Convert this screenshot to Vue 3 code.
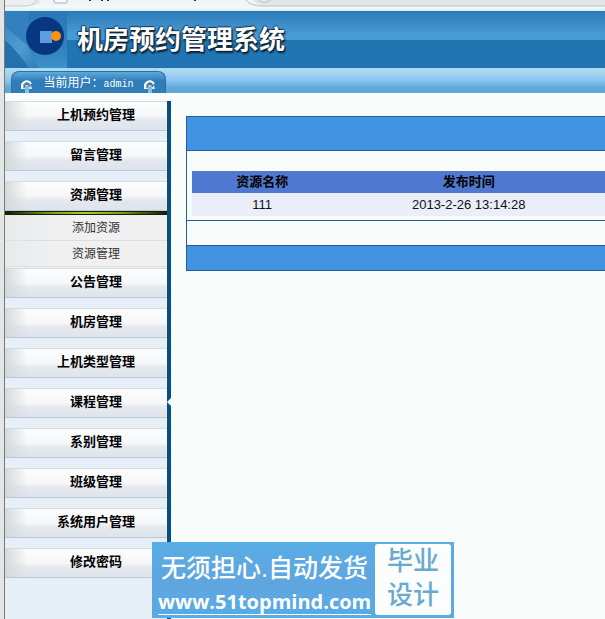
<script setup>
import { ref } from 'vue'

const user = 'admin'
const openMenu = ref('资源管理')

const menus = [
    { title: '上机预约管理' },
    { title: '留言管理' },
    { title: '资源管理', children: ['添加资源', '资源管理'] },
    { title: '公告管理' },
    { title: '机房管理' },
    { title: '上机类型管理' },
    { title: '课程管理' },
    { title: '系别管理' },
    { title: '班级管理' },
    { title: '系统用户管理' },
    { title: '修改密码' },
]

const resources = [
    { name: '111', date: '2013-2-26 13:14:28' },
]

function toggle(title)
{
    openMenu.value = openMenu.value === title ? '' : title
}
</script>

<template>
    <div class="window">
        <div class="frame">
            <svg class="tabs" width="605" height="11" aria-hidden="true">
                <rect width="605" height="6" fill="#e2e6e5"/>
                <path d="M0 0H248Q252 6 260 6H22Q34 6 36 0Z" fill="#f1f5f6"/>
                <path d="M0 0H31Q29 6 22 6H0Z" fill="#eceef0"/>
                <path d="M0 6H20Q29 6 31 0" fill="none" stroke="#c9cccd"/>
                <path d="M241 0Q246 6 256 6H605" fill="none" stroke="#b9bfbf"/>
                <path d="M49 0V2Q49 3 51 3H60Q62 3 62 2V0" fill="#f6fbfc" stroke="#9fb0ba"/>
                <path d="M253 0Q259 5 266 0" fill="#d7e7ef" stroke="#b5c6ce"/>
                <path d="M85 0v1M97 0v1M103 0v1M190 0v1" stroke="#333" stroke-width="2"/>
            </svg>

            <header class="banner">
                <svg class="logo" width="62" height="57" aria-hidden="true">
                    <defs>
                        <linearGradient id="beam" x1="0" y1="0" x2="1" y2="1">
                            <stop offset="0" stop-color="#3e8cc8"/>
                            <stop offset=".5" stop-color="#4f9ad0"/>
                            <stop offset="1" stop-color="#2b7ab4"/>
                        </linearGradient>
                        <linearGradient id="plate" x1="0" y1="0" x2="0" y2="1">
                            <stop offset="0" stop-color="#2a78b9"/>
                            <stop offset=".6" stop-color="#2f7fbd"/>
                            <stop offset="1" stop-color="#3d90c8"/>
                        </linearGradient>
                    </defs>
                    <path d="M0 0H62V57H0Z" fill="#3480bf"/>
                    <path d="M0 16L22 34L34 57H24L0 30Z" fill="url(#beam)"/>
                    <path d="M0 29Q14 42 24 57H0Z" fill="#2470ac"/>
                    <path d="M24 0H62V57H34Q24 46 22 22Z" fill="url(#plate)"/>
                    <circle cx="40" cy="25" r="19" fill="#073780"/>
                    <rect x="35" y="20" width="12" height="12" fill="#5c9ddd"/>
                    <circle cx="51" cy="25" r="5" fill="#ff930c"/>
                </svg>
                <h1>机房预约管理系统</h1>
            </header>

            <div class="userbar">
                <div class="user">
                    <svg width="12" height="16" viewBox="0 0 12 16" aria-hidden="true">
                        <path d="M1 12A5 5 0 1 1 11 12Z" fill="#d9e7ee"/>
                        <path d="M1 12A5 6 0 0 1 10 7" fill="none" stroke="#fff" stroke-width="2"/>
                        <path d="M3 11A3 3 0 0 1 9 10" fill="none" stroke="#3b4650" stroke-width="1"/>
                        <path d="M6 9V16" stroke="#7ec0ea" stroke-width="4"/>
                    </svg>
                    <span>当前用户：<b>{{ user }}</b></span>
                    <svg width="12" height="16" viewBox="0 0 12 16" aria-hidden="true">
                        <path d="M1 12A5 5 0 1 1 11 12Z" fill="#d9e7ee"/>
                        <path d="M1 12A5 6 0 0 1 10 7" fill="none" stroke="#fff" stroke-width="2"/>
                        <path d="M3 11A3 3 0 0 1 9 10" fill="none" stroke="#3b4650" stroke-width="1"/>
                        <path d="M6 9V16" stroke="#7ec0ea" stroke-width="4"/>
                    </svg>
                </div>
            </div>

            <div class="body">
                <nav class="sidebar">
                    <section v-for="menu in menus" :key="menu.title" :class="{ open: menu.children && openMenu === menu.title }">
                        <button type="button" class="menu" @click="toggle(menu.title)">{{ menu.title }}</button>
                        <ul v-if="menu.children && openMenu === menu.title">
                            <li v-for="child in menu.children" :key="child"><a href="#">{{ child }}</a></li>
                        </ul>
                    </section>
                </nav>
                <div class="divider">
                    <svg width="4" height="8" aria-hidden="true"><path d="M4 0V8L0 4Z" fill="#f0f7fa"/></svg>
                </div>

                <main>
                    <div class="panel">
                        <div class="panel-head"></div>
                        <div class="panel-body">
                            <table>
                                <thead>
                                    <tr><th class="name">资源名称</th><th>发布时间</th></tr>
                                </thead>
                                <tbody>
                                    <tr v-for="item in resources" :key="item.name">
                                        <td>{{ item.name }}</td>
                                        <td>{{ item.date }}</td>
                                    </tr>
                                </tbody>
                            </table>
                        </div>
                        <div class="panel-pager"></div>
                        <div class="panel-foot"></div>
                    </div>
                </main>
            </div>
        </div>

        <aside class="promo">
            <div class="promo-text">
                <p>无须担心.自动发货</p>
                <a href="#">www.51topmind.com</a>
            </div>
            <div class="promo-tag">毕业<br>设计</div>
        </aside>
    </div>
</template>

<style>
body
{
    margin: 0;
    background: #f8fcfb;
}
</style>

<style scoped>
.window
{
    position: relative;
    display: flex;
    min-height: 100vh;
    box-sizing: border-box;
    border-left: 4px solid #e4e6e6;
    overflow: hidden;
    font: 12px/16px "Liberation Sans", "Noto Sans CJK SC", sans-serif;
    color: #111;
}

.frame
{
    display: flex;
    flex: 1;
    flex-direction: column;
    min-width: 0;
    border-left: 1px solid #77797c;
}

.tabs
{
    display: block;
    flex: none;
    background: linear-gradient(#f4f9f9 7px, #d3f3fb);
}

.banner
{
    display: flex;
    align-items: center;
    gap: 10px;
    height: 57px;
    background: linear-gradient(#36759f 0, #2e7dbc 2px, #4798d3 22px, #4a9ad5 29px, #2176b1 29px, #2175b5 55px, #2870a0);
}

.banner h1
{
    margin: 0;
    font-size: 26px;
    line-height: 40px;
    font-weight: 700;
    color: #fff;
    text-shadow: 1px 1px 1px #0b2237, -1px 0 1px #18374f, 0 -1px 1px #18374f, 1px 2px 2px #0b2237;
}

.userbar
{
    display: flex;
    align-items: flex-end;
    height: 25px;
    padding-left: 6px;
    background: linear-gradient(#a4dcf8, #add8f0 3px, #8dc5ef 12px, #78b9e6 15px, #5ca6d9 21px, #65a8cb);
}

.user
{
    display: flex;
    align-items: flex-end;
    justify-content: space-between;
    width: 155px;
    height: 22px;
    box-sizing: border-box;
    padding: 0 9px;
    border: 1px solid #2d70a4;
    border-bottom: 0;
    border-radius: 8px 8px 0 0;
    background: linear-gradient(#60a9da, #2e7db9 9px, #2f7eb7);
    color: #fff;
}

.user span
{
    align-self: center;
}

.user b
{
    font: 10px "Liberation Mono", monospace;
}

.body
{
    display: flex;
    flex: 1;
    padding-top: 8px;
}

.sidebar
{
    flex: none;
    width: 162px;
    background: #e6eff8;
}

section
{
    margin-bottom: 10px;
}

section.open
{
    margin-bottom: 0;
}

.menu
{
    display: block;
    width: 100%;
    height: 30px;
    padding: 0 0 2px 20px;
    border: 0;
    border-top: 1px solid #d5dcdf;
    border-bottom: 1px solid #bcc8d2;
    background:
        linear-gradient(90deg, #d3d9da, #e6eae900 22px),
        linear-gradient(#fcfdfd, #f5f7f8 14px, #e5e9ee 18px, #dde4eb);
    font: bold 13px/16px "Liberation Sans", "Noto Sans CJK SC", sans-serif;
    color: #000;
    cursor: pointer;
}

ul
{
    margin: 0;
    padding: 4px 0 1px;
    list-style: none;
    background: linear-gradient(90deg, #101a05, #7da51c 30%, #a8cf26 50%, #7da51c 70%, #101a05) 0 1px / 100% 2px no-repeat, linear-gradient(#14200c 4px, #f0f0f0 4px);
}

li
{
    height: 26px;
    box-sizing: border-box;
    border-bottom: 1px solid #dddfe0;
    background: linear-gradient(90deg, #e8eaec, #f0f0f1 30%);
    text-align: center;
}

li a
{
    display: block;
    padding-left: 20px;
    line-height: 26px;
    color: #333;
    text-decoration: none;
}

.divider
{
    display: flex;
    align-items: center;
    flex: none;
    width: 4px;
    background: #06507f;
}

.divider svg
{
    margin-bottom: -84px;
}

main
{
    flex: 1;
    min-width: 0;
    padding: 15px 0 0 15px;
}

.panel
{
    border: 1px solid #205f9f;
    border-right: 0;
}

.panel-head
{
    height: 33px;
    background: #4294e2;
}

.panel-body
{
    padding: 20px 0 4px 5px;
    border-top: 1px solid #205f9f;
    border-bottom: 1px solid #205f9f;
}

.panel-pager
{
    height: 24px;
}

.panel-foot
{
    height: 24px;
    border-top: 1px solid #205f9f;
    background: #4294e2;
}

table
{
    width: 100%;
    table-layout: fixed;
    border-collapse: collapse;
    font-size: 13px;
    line-height: 18px;
    text-align: center;
}

th
{
    height: 22px;
    padding: 0;
    background: #4f79d0;
    color: #000;
}

td
{
    height: 23px;
    padding: 0;
    background: #e9eef8;
}

.name
{
    width: 34%;
}

.promo
{
    position: absolute;
    left: 148px;
    bottom: 1px;
    display: flex;
    gap: 4px;
    box-sizing: border-box;
    width: 302px;
    height: 76px;
    padding: 2px 3px 3px 6px;
    background: linear-gradient(#58ade6, #5fa5df 50%, #56ace6);
}

.promo-text
{
    flex: 1;
    min-width: 0;
    color: #fff;
    white-space: nowrap;
}

.promo-text p
{
    margin: 0;
    padding-left: 3px;
    font-size: 25px;
    line-height: 48px;
    font-weight: 500;
}

.promo-text a
{
    display: block;
    font: bold 20px/20px "Open Sans", sans-serif;
    color: #fff;
    text-decoration: underline;
    text-decoration-thickness: 1px;
    text-underline-offset: 5px;
}

.promo-tag
{
    flex: none;
    width: 76px;
    border-radius: 3px;
    background: #fbfdfe;
    color: #69a9d0;
    font-size: 26px;
    font-weight: 500;
    line-height: 34px;
    text-align: center;
}
</style>
